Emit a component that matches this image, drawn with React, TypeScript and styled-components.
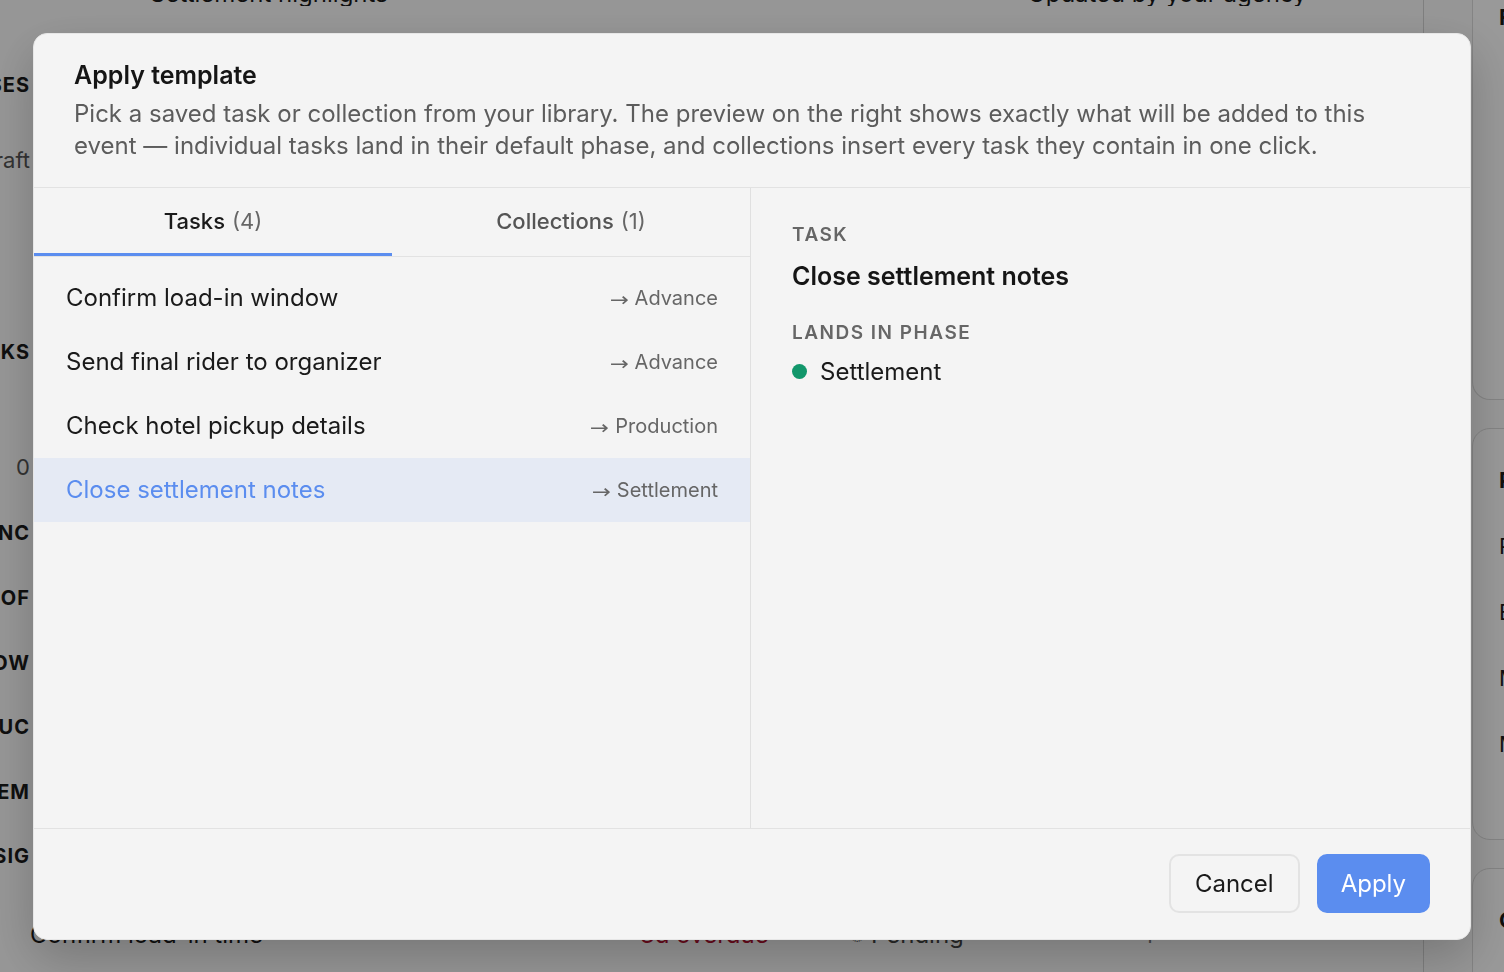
import React, { useState } from 'react'
import styled, { createGlobalStyle } from 'styled-components'

const GlobalStyle = createGlobalStyle`
  * { box-sizing: border-box; }
  html, body { margin: 0; height: 100%; }
  body {
    font-family: Inter, "Noto Sans", sans-serif;
    background: #fbfbfb;
    color: #1a1a1a;
    overflow: hidden;
  }
`

interface Template {
  id: string
  title: string
  phase: string
}

const tasks: Template[] = [
  { id: 't1', title: 'Confirm load-in window', phase: 'Advance' },
  { id: 't2', title: 'Send final rider to organizer', phase: 'Advance' },
  { id: 't3', title: 'Check hotel pickup details', phase: 'Production' },
  { id: 't4', title: 'Close settlement notes', phase: 'Settlement' }
]

const phaseColors: Record<string, string> = {
  Advance: '#5b8def',
  Production: '#d88a1c',
  Settlement: '#12976b'
}

// page behind the dialog (only bits peek out around the edges)
const Page = styled.div`
  display: flex;
  width: 100vw;
  height: 100vh;
  overflow: hidden;
`

const Main = styled.div`
  flex: 0 0 1424px;
  display: flex;
  flex-direction: column;
  border-right: 1px solid #d4d4d4;
`

const TopStrip = styled.div`
  height: 6px;
  overflow: hidden;
  display: flex;
  align-items: flex-end;
  gap: 640px;
  padding-left: 150px;
  font-size: 24px;
  line-height: 24px;
  white-space: nowrap;
`

const Rail = styled.div`
  width: 30px;
  display: flex;
  flex-direction: column;
  align-items: flex-end;
  padding-top: 66px;
  overflow: hidden;
`

const RailLabel = styled.div<{ $gap: number; $bold?: boolean }>`
  margin-bottom: ${(p) => p.$gap}px;
  font-size: ${(p) => (p.$bold ? 20 : 22)}px;
  line-height: 26px;
  font-weight: ${(p) => (p.$bold ? 700 : 400)};
  letter-spacing: ${(p) => (p.$bold ? '1px' : '0')};
  color: ${(p) => (p.$bold ? '#1a1a1a' : '#555')};
  white-space: nowrap;
`

const TaskRow = styled.div`
  margin-top: auto;
  margin-bottom: 22px;
  display: flex;
  align-items: center;
  padding-left: 30px;
  font-size: 24px;
  line-height: 30px;
  white-space: nowrap;
`

const RowCell = styled.span<{ $w: number; $color?: string }>`
  width: ${(p) => p.$w}px;
  color: ${(p) => p.$color || '#1a1a1a'};
`

const Side = styled.div`
  flex: 1;
  display: flex;
  flex-direction: column;
  gap: 28px;
  padding-left: 48px;
`

const SideCard = styled.div<{ $h: number; $top?: boolean }>`
  height: ${(p) => p.$h}px;
  flex-shrink: 0;
  background: #fff;
  border: 1px solid #dcdcdc;
  border-top: ${(p) => (p.$top ? 'none' : '1px solid #dcdcdc')};
  border-radius: ${(p) => (p.$top ? '0 0 0 18px' : '18px 0 0 18px')};
  padding: ${(p) => (p.$top ? '4px' : '38px')} 0 0 26px;
  display: flex;
  flex-direction: column;
  gap: 40px;
  font-size: 22px;
  line-height: 26px;
  white-space: nowrap;
`

const SideTitle = styled.div`
  font-weight: 700;
`

// dialog
const Overlay = styled.div`
  position: fixed;
  inset: 0;
  background: rgba(0, 0, 0, 0.4);
  display: flex;
  align-items: center;
  justify-content: center;
`

const Dialog = styled.div`
  width: 1438px;
  height: 907px;
  background: #f4f4f4;
  border: 1px solid #e6e6e6;
  border-radius: 14px;
  box-shadow: 0 18px 50px rgba(0, 0, 0, 0.22);
  display: flex;
  flex-direction: column;
  overflow: hidden;
`

const Header = styled.div`
  padding: 25px 40px 25px;
  border-bottom: 1px solid #e2e2e2;
`

const Title = styled.h2`
  margin: 0 0 7px;
  font-size: 25px;
  line-height: 32px;
  font-weight: 600;
  color: #151515;
`

const Description = styled.p`
  margin: 0;
  max-width: 1330px;
  font-size: 24px;
  line-height: 32px;
  color: #5c5c5c;
`

const Body = styled.div`
  flex: 1;
  display: grid;
  grid-template-columns: 717px 1fr;
  min-height: 0;
`

const LeftPane = styled.div`
  border-right: 1px solid #e0e0e0;
  display: flex;
  flex-direction: column;
`

const Tabs = styled.div`
  display: grid;
  grid-template-columns: 358px 1fr;
  border-bottom: 1px solid #e2e2e2;
`

const Tab = styled.button<{ $active: boolean }>`
  height: 68px;
  padding-top: 2px;
  border: none;
  border-bottom: 3px solid ${(p) => (p.$active ? '#5b8def' : 'transparent')};
  background: transparent;
  font-family: inherit;
  font-size: 22px;
  font-weight: 500;
  color: ${(p) => (p.$active ? '#1a1a1a' : '#555')};
  cursor: pointer;
`

const Count = styled.span`
  margin-left: 7px;
  font-weight: 400;
  color: #666;
`

const List = styled.div`
  padding-top: 9px;
`

const Item = styled.div<{ $selected: boolean }>`
  height: 64px;
  padding: 0 32px;
  display: flex;
  align-items: center;
  justify-content: space-between;
  background: ${(p) => (p.$selected ? '#e5eaf4' : 'transparent')};
  cursor: pointer;
`

const ItemTitle = styled.span<{ $selected: boolean }>`
  font-size: 24px;
  color: ${(p) => (p.$selected ? '#5b8def' : '#1a1a1a')};
`

const ItemPhase = styled.span`
  display: flex;
  align-items: center;
  font-size: 20px;
  color: #666;
`

const Arrow = styled.span`
  font-family: "DejaVu Sans", sans-serif;
  font-size: 19px;
  margin: 2px 6px 0 0;
  transform: scaleX(1.2);
  transform-origin: right center;
`

const RightPane = styled.div`
  padding: 35px 41px;
  display: flex;
  flex-direction: column;
`

const Label = styled.div`
  font-size: 19px;
  line-height: 24px;
  font-weight: 600;
  letter-spacing: 1.5px;
  text-transform: uppercase;
  color: #666;
`

const PreviewTitle = styled.div`
  margin: 13px 0 29px;
  font-size: 25px;
  line-height: 32px;
  font-weight: 600;
  color: #151515;
`

const PhaseRow = styled.div`
  margin-top: 12px;
  display: flex;
  align-items: center;
  gap: 13px;
  font-size: 24px;
  line-height: 30px;
  color: #1a1a1a;
`

const Dot = styled.span<{ $color: string }>`
  width: 15px;
  height: 15px;
  border-radius: 50%;
  background: ${(p) => p.$color};
`

const Footer = styled.div`
  border-top: 1px solid #e2e2e2;
  padding: 25px 40px 26px;
  display: flex;
  justify-content: flex-end;
  gap: 17px;
`

const Button = styled.button<{ $primary?: boolean }>`
  height: 59px;
  padding: 0 ${(p) => (p.$primary ? 22 : 24)}px;
  border-radius: 10px;
  border: 2px solid ${(p) => (p.$primary ? '#5b8def' : '#e3e3e3')};
  background: ${(p) => (p.$primary ? '#5b8def' : '#f4f4f4')};
  color: ${(p) => (p.$primary ? '#fff' : '#1a1a1a')};
  font-family: inherit;
  font-size: 24px;
  cursor: pointer;
`

const App = () => {
  const [tab, setTab] = useState<'tasks' | 'collections'>('tasks')
  const [selectedId, setSelectedId] = useState('t4')
  const selected = tasks.find((t) => t.id === selectedId) || tasks[0]

  return (
    <>
      <GlobalStyle />
      <Page>
        <Main>
          <TopStrip>
            <span>Settlement highlights</span>
            <span>Updated by your agency</span>
          </TopStrip>
          <Rail>
            <RailLabel $gap={49} $bold>PHASES</RailLabel>
            <RailLabel $gap={166}>Draft</RailLabel>
            <RailLabel $gap={89} $bold>TASKS</RailLabel>
            <RailLabel $gap={40}>0</RailLabel>
            <RailLabel $gap={39} $bold>ADVANC</RailLabel>
            <RailLabel $gap={39} $bold>LOAD-OF</RailLabel>
            <RailLabel $gap={38} $bold>SHOW</RailLabel>
            <RailLabel $gap={39} $bold>PRODUC</RailLabel>
            <RailLabel $gap={38} $bold>SETTLEM</RailLabel>
            <RailLabel $gap={0} $bold>DESIG</RailLabel>
          </Rail>
          <TaskRow>
            <RowCell $w={300}>Confirm load-in time</RowCell>
            <RowCell $w={310} $color="#555">⌃</RowCell>
            <RowCell $w={210} $color="#b0102e">3d overdue</RowCell>
            <RowCell $w={290} $color="#444">◌ Pending</RowCell>
            <RowCell $w={40} $color="#777">↑</RowCell>
          </TaskRow>
        </Main>
        <Side>
          <SideCard $h={400} $top>
            <SideTitle>Files</SideTitle>
          </SideCard>
          <SideCard $h={412}>
            <SideTitle>People</SideTitle>
            <span>Promoter</span>
            <span>Engineer</span>
            <span>Manager</span>
            <span>Merch</span>
          </SideCard>
          <SideCard $h={200}>
            <SideTitle>Contacts</SideTitle>
            <span>Agent</span>
          </SideCard>
        </Side>
      </Page>

      <Overlay>
        <Dialog role="dialog" aria-labelledby="apply-template-title">
          <Header>
            <Title id="apply-template-title">Apply template</Title>
            <Description>
              Pick a saved task or collection from your library. The preview on the right shows exactly what will be
              added to this event — individual tasks land in their default phase, and collections insert every task
              they contain in one click.
            </Description>
          </Header>
          <Body>
            <LeftPane>
              <Tabs>
                <Tab $active={tab === 'tasks'} onClick={() => setTab('tasks')}>
                  Tasks<Count>(4)</Count>
                </Tab>
                <Tab $active={tab === 'collections'} onClick={() => setTab('collections')}>
                  Collections<Count>(1)</Count>
                </Tab>
              </Tabs>
              <List>
                {tasks.map((t) => (
                  <Item key={t.id} $selected={t.id === selectedId} onClick={() => setSelectedId(t.id)}>
                    <ItemTitle $selected={t.id === selectedId}>{t.title}</ItemTitle>
                    <ItemPhase>
                      <Arrow>→</Arrow>
                      {t.phase}
                    </ItemPhase>
                  </Item>
                ))}
              </List>
            </LeftPane>
            <RightPane>
              <Label>Task</Label>
              <PreviewTitle>{selected.title}</PreviewTitle>
              <Label>Lands in phase</Label>
              <PhaseRow>
                <Dot $color={phaseColors[selected.phase]} />
                {selected.phase}
              </PhaseRow>
            </RightPane>
          </Body>
          <Footer>
            <Button>Cancel</Button>
            <Button $primary>Apply</Button>
          </Footer>
        </Dialog>
      </Overlay>
    </>
  )
}

export default App
